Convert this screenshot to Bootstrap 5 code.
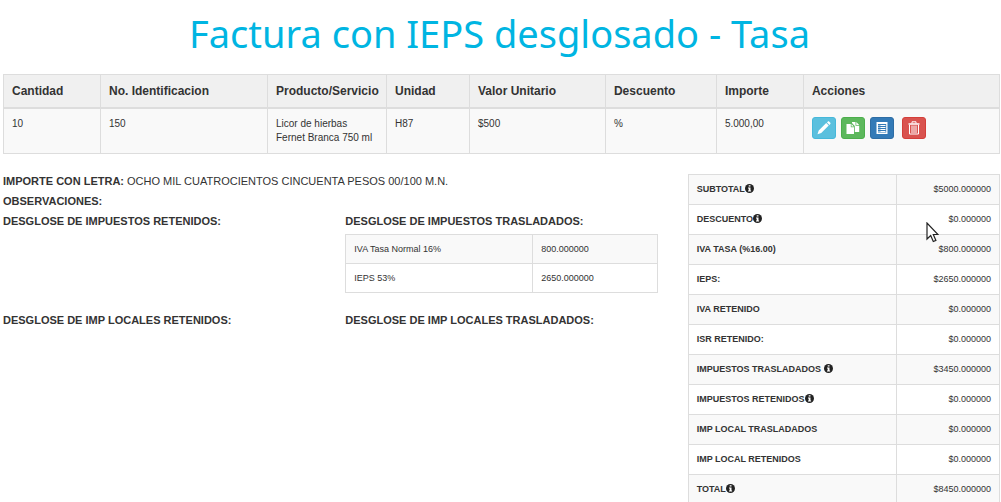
<!DOCTYPE html>
<html lang="es">
<head>
<meta charset="utf-8">
<meta name="viewport" content="width=device-width, initial-scale=1">
<title>Factura con IEPS desglosado - Tasa</title>
<link href="https://cdn.jsdelivr.net/npm/bootstrap@5.3.0/dist/css/bootstrap.min.css" rel="stylesheet">
<style>
  body { font-family: "Liberation Sans", Arial, sans-serif; font-size: 11px; line-height: 20px; color: #333; overflow-x: hidden; }
  .page { padding: 0 1px 0 3px; }
  .page-title { font-family: "Trebuchet MS", "Noto Sans", sans-serif; font-size: 38px; line-height: 48px; color: #00b5e2; padding: 9px 4px 17px 0; }
  .invoice-table { --bs-table-color: #333; --bs-table-striped-color: #333; --bs-table-striped-bg: #f9f9f9; --bs-table-border-color: #ddd; border-color: #ddd; }
  .concepts { table-layout: fixed; font-size: 10px; line-height: 14px; }
  .concepts th { font-size: 12px; line-height: 16px; padding: 8px; background: #f0f0f0; border-bottom-width: 2px; }
  .concepts td { padding: 8px; }
  .concepts tbody { border-top: 0; }
  .btn-action { width: 24px; height: 22px; padding: 0; border-radius: 3px; color: #fff; display: inline-flex; align-items: center; justify-content: center; }
  .btn-action:hover { color: #fff; }
  .btn-edit { background: #5bc0de; border-color: #46b8da; }
  .btn-copy { background: #5cb85c; border-color: #4cae4c; }
  .btn-list { background: #337ab7; border-color: #2e6da4; }
  .btn-delete { background: #d9534f; border-color: #d43f3a; }
  .row { --bs-gutter-x: 30px; }
  .summary { padding-top: 17px; }
  .totals-column { padding-top: 3px; }
  .taxes { table-layout: fixed; font-size: 9px; line-height: 12px; margin-top: 3px; }
  .taxes td { padding: 8px; }
  .totals { table-layout: fixed; font-size: 9px; line-height: 13px; }
  .totals th, .totals td { padding: 8px; }
  .local-taxes { padding-top: 17px; }
  .ms-px { margin-left: 1px; }
  .info { width: 9px; height: 9px; vertical-align: -1px; }
  .pointer { position: absolute; left: 29px; top: 17px; width: 13px; height: 21px; z-index: 2; pointer-events: none; }
</style>
</head>
<body>
<svg class="d-none" aria-hidden="true">
  <symbol id="info" viewBox="0 0 9 9"><circle cx="4.500" cy="4.500" r="4.500" fill="#222"/><path fill="#fff" d="M3.700 1.200h1.800v1.400H3.700zM3 3.500h2.500v3h.6v1H3v-1h.7v-2H3z"/></symbol>
</svg>
<main class="page">
  <h1 class="page-title text-center fw-normal m-0">Factura con IEPS desglosado - Tasa</h1>

  <table class="table table-bordered table-striped invoice-table concepts mb-0">
    <colgroup>
      <col style="width:9.740%"><col style="width:16.770%"><col style="width:11.950%"><col style="width:8.330%"><col style="width:13.650%"><col style="width:11.140%"><col style="width:8.740%"><col>
    </colgroup>
    <thead>
      <tr><th scope="col">Cantidad</th><th scope="col">No. Identificacion</th><th scope="col" class="text-nowrap">Producto/Servicio</th><th scope="col">Unidad</th><th scope="col">Valor Unitario</th><th scope="col">Descuento</th><th scope="col">Importe</th><th scope="col">Acciones</th></tr>
    </thead>
    <tbody>
      <tr>
        <td>10</td><td>150</td><td>Licor de hierbas Fernet Branca 750 ml</td><td>H87</td><td>$500</td><td>%</td><td>5.000,00</td>
        <td>
          <div class="d-flex">
            <button type="button" class="btn btn-action btn-edit me-1" aria-label="Editar"><svg width="14" height="14" viewBox="0 0 14 14" fill="currentColor"><path d="M.5 13.200l1.200-3.600 7.500-7.500 2.500 2.500L4.200 12zM10 1.400l.9-.8c.5-.4 1-.3 1.400.1l1 1c.4.4.4.9 0 1.300l-.8 1z"/></svg></button>
            <button type="button" class="btn btn-action btn-copy ms-px me-1" aria-label="Duplicar"><svg width="14" height="14" viewBox="0 0 14 14" fill="currentColor"><path d="M.5 3h4.300v3.300H8V13H.5zM5.500 3l2.300 2.500H5.500z"/><path d="M6 1h3.500v3.700h3.700V11H8.800V5L6 2zM10.300 1l2.900 2.900h-2.900z"/></svg></button>
            <button type="button" class="btn btn-action btn-list ms-px me-2" aria-label="Detalle"><svg width="14" height="14" viewBox="0 0 14 14"><path fill="#fff" d="M1.500 1h11v12h-11z"/><path fill="#337ab7" d="M3 3h8.200v8.500H3z"/><path stroke="#fff" d="M3.500 4.500h1M5.300 4.500h5.200M3.500 6.500h1M5.300 6.500h5.200M3.500 8.500h1M5.300 8.500h5.200M3.500 10.500h1M5.300 10.500h5.200"/></svg></button>
            <button type="button" class="btn btn-action btn-delete" aria-label="Eliminar"><svg width="14" height="14" viewBox="0 0 14 14" fill="none" stroke="currentColor"><path d="M1.500 3h11" stroke-width="1.500"/><path d="M5 2.500V.8h4v1.700M2.500 4v9h9V4M5 4.500v7.500M7 4.500v7.500M9 4.500v7.500"/></svg></button>
          </div>
        </td>
      </tr>
    </tbody>
  </table>

  <div class="row summary">
    <section class="col-8">
      <div><b>IMPORTE CON LETRA:</b> OCHO MIL CUATROCIENTOS CINCUENTA PESOS 00/100 M.N.</div>
      <div><b>OBSERVACIONES:</b></div>
      <div class="row">
        <div class="col-6"><b>DESGLOSE DE IMPUESTOS RETENIDOS:</b></div>
        <div class="col-6">
          <b>DESGLOSE DE IMPUESTOS TRASLADADOS:</b>
          <table class="table table-bordered table-striped invoice-table taxes mb-0">
            <colgroup><col style="width:60%"><col></colgroup>
            <tbody>
              <tr><td>IVA Tasa Normal 16%</td><td>800.000000</td></tr>
              <tr><td>IEPS 53%</td><td>2650.000000</td></tr>
            </tbody>
          </table>
        </div>
      </div>
      <div class="row local-taxes">
        <div class="col-6"><b>DESGLOSE DE IMP LOCALES RETENIDOS:</b></div>
        <div class="col-6"><b>DESGLOSE DE IMP LOCALES TRASLADADOS:</b></div>
      </div>
    </section>
    <section class="col-4 totals-column">
      <table class="table table-bordered table-striped invoice-table totals mb-0">
        <colgroup><col style="width:67%"><col></colgroup>
        <tbody>
          <tr><th scope="row">SUBTOTAL<svg class="info"><use href="#info"/></svg></th><td class="text-end">$5000.000000</td></tr>
          <tr><th scope="row">DESCUENTO<svg class="info"><use href="#info"/></svg></th><td class="text-end position-relative">$0.000000<svg class="pointer" viewBox="0 0 13 21"><path d="M1 1v16l3.700-3.500 2.600 6 2.600-1.100-2.600-5.900H12z" fill="#fff" stroke="#222" stroke-width="1.200"/></svg></td></tr>
          <tr><th scope="row">IVA TASA (%16.00)</th><td class="text-end">$800.000000</td></tr>
          <tr><th scope="row">IEPS:</th><td class="text-end">$2650.000000</td></tr>
          <tr><th scope="row">IVA RETENIDO</th><td class="text-end">$0.000000</td></tr>
          <tr><th scope="row">ISR RETENIDO:</th><td class="text-end">$0.000000</td></tr>
          <tr><th scope="row">IMPUESTOS TRASLADADOS <svg class="info"><use href="#info"/></svg></th><td class="text-end">$3450.000000</td></tr>
          <tr><th scope="row">IMPUESTOS RETENIDOS<svg class="info"><use href="#info"/></svg></th><td class="text-end">$0.000000</td></tr>
          <tr><th scope="row">IMP LOCAL TRASLADADOS</th><td class="text-end">$0.000000</td></tr>
          <tr><th scope="row">IMP LOCAL RETENIDOS</th><td class="text-end">$0.000000</td></tr>
          <tr><th scope="row">TOTAL<svg class="info"><use href="#info"/></svg></th><td class="text-end">$8450.000000</td></tr>
        </tbody>
      </table>
    </section>
  </div>
</main>
<script src="https://cdn.jsdelivr.net/npm/bootstrap@5.3.0/dist/js/bootstrap.bundle.min.js"></script>
</body>
</html>
